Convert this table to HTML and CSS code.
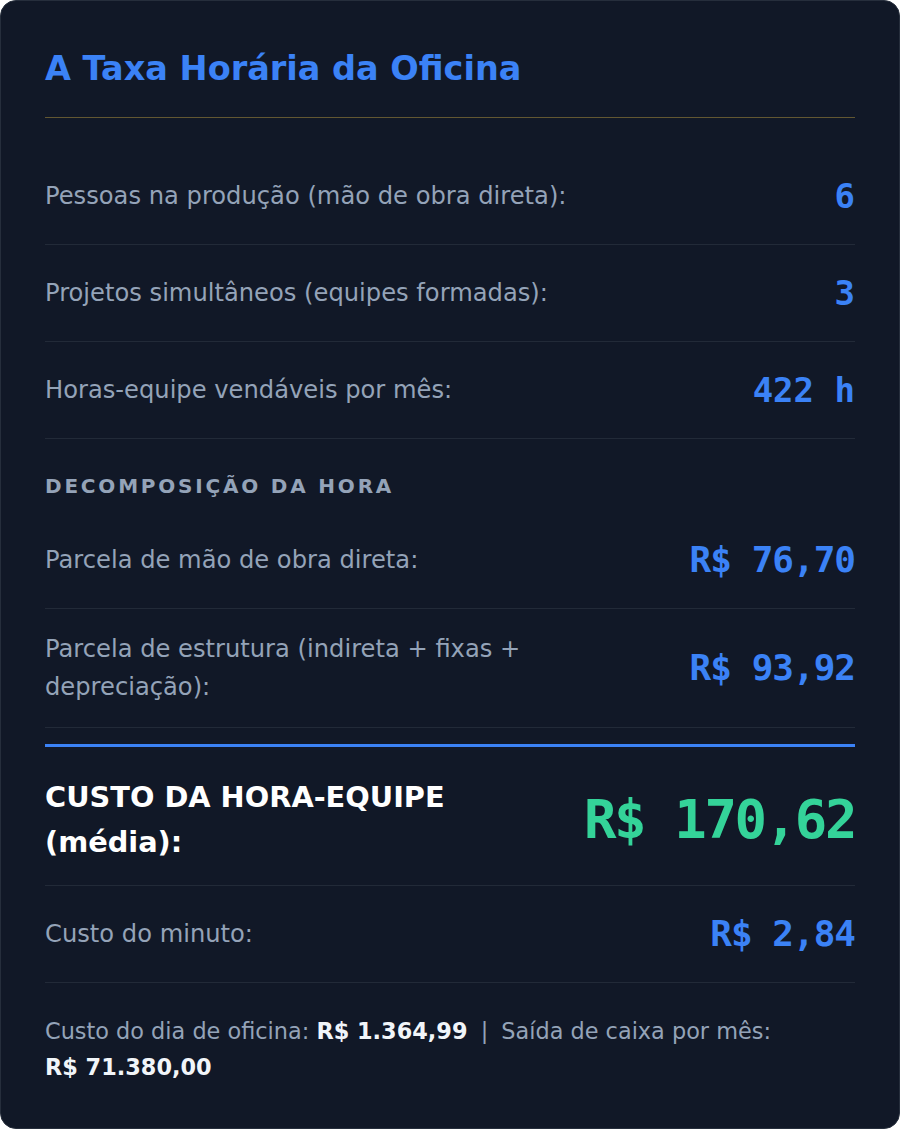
FILE: index.html
```html
<!DOCTYPE html>
<html lang="pt-BR">
<head>
<meta charset="utf-8">
<title>A Taxa Horária da Oficina</title>
<link rel="stylesheet" href="styles.css">
</head>
<body>
<div class="card">
  <header class="card-header">
    <h1 class="title">A Taxa Horária da Oficina</h1>
  </header>

  <div class="row first">
    <span class="label">Pessoas na produção (mão de obra direta):</span>
    <span class="value">6</span>
  </div>
  <div class="row">
    <span class="label">Projetos simultâneos (equipes formadas):</span>
    <span class="value">3</span>
  </div>
  <div class="row">
    <span class="label">Horas-equipe vendáveis por mês:</span>
    <span class="value">422 h</span>
  </div>

  <div class="section-title">Decomposição da hora</div>

  <div class="row">
    <span class="label">Parcela de mão de obra direta:</span>
    <span class="value money">R$ 76,70</span>
  </div>
  <div class="row">
    <span class="label">Parcela de estrutura (indireta + fixas + depreciação):</span>
    <span class="value money">R$ 93,92</span>
  </div>

  <div class="row total">
    <span class="label">CUSTO DA HORA-EQUIPE (média):</span>
    <span class="value big">R$ 170,62</span>
  </div>
  <div class="row">
    <span class="label">Custo do minuto:</span>
    <span class="value money">R$ 2,84</span>
  </div>

  <p class="footer">Custo do dia de oficina: <strong>R$&nbsp;1.364,99</strong> <span class="sep">|</span> Saída de caixa por mês: <strong>R$&nbsp;71.380,00</strong></p>
</div>
</body>
</html>
```

FILE: styles.css
```css
html, body {
  margin: 0;
  padding: 0;
  background: #ffffff;
}

body {
  font-family: "DejaVu Sans", "Noto Sans", sans-serif;
}

.card {
  box-sizing: border-box;
  width: 900px;
  height: 1129px;
  background: #111827;
  border: 1px solid #262e3c;
  border-radius: 16px;
  padding: 44px;
}

.card-header {
  border-bottom: 1px solid #625732;
  padding-bottom: 24px;
  margin-bottom: 30px;
}

.title {
  margin: 0;
  font-size: 33.5px;
  line-height: 48px;
  font-weight: bold;
  color: #3b82f6;
}

.row {
  display: flex;
  align-items: center;
  justify-content: space-between;
  gap: 24px;
  padding: 21px 0;
  border-bottom: 1px solid #222a38;
}

.label {
  flex: 1 1 auto;
  font-size: 24.2px;
  line-height: 38px;
  color: #94a3b8;
}

.value {
  flex: 0 0 auto;
  font-family: "DejaVu Sans Mono", "Liberation Mono", monospace;
  font-weight: bold;
  font-size: 34px;
  line-height: 54px;
  color: #3b82f6;
  text-align: right;
  white-space: nowrap;
}

.value.money {
  font-size: 36px;
  letter-spacing: -1px;
}

.section-title {
  padding: 35px 0 14px;
  font-size: 20px;
  line-height: 24px;
  font-weight: bold;
  letter-spacing: 2.8px;
  text-transform: uppercase;
  color: #94a3b8;
}

.row.total {
  margin-top: 16px;
  border-top: 3px solid #3b82f6;
  padding: 28px 0 20px;
}

.row.total .label {
  font-size: 28.8px;
  line-height: 45px;
  font-weight: bold;
  color: #ffffff;
}

.value.big {
  font-size: 54px;
  line-height: 64px;
  letter-spacing: -2.4px;
  color: #34d399;
}

.footer {
  margin: 30px 0 0;
  font-size: 22.4px;
  line-height: 36px;
  color: #94a3b8;
}

.footer strong {
  color: #f1f5f9;
}

.footer .sep {
  margin: 0 6px;
}
```
